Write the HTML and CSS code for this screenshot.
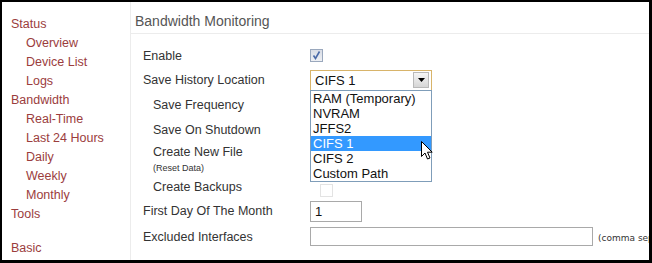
FILE: index.html
```html
<!DOCTYPE html>
<html>
<head>
<meta charset="utf-8">
<link rel="stylesheet" href="styles.css">
</head>
<body>
<div class="frame">
  <nav class="side">
    <div class="nav-item">Status</div>
    <div class="nav-item sub">Overview</div>
    <div class="nav-item sub">Device List</div>
    <div class="nav-item sub">Logs</div>
    <div class="nav-item">Bandwidth</div>
    <div class="nav-item sub">Real-Time</div>
    <div class="nav-item sub">Last 24 Hours</div>
    <div class="nav-item sub">Daily</div>
    <div class="nav-item sub">Weekly</div>
    <div class="nav-item sub">Monthly</div>
    <div class="nav-item">Tools</div>
    <div class="nav-item gap">Basic</div>
  </nav>
  <main class="main">
    <h1 class="title">Bandwidth Monitoring</h1>
    <div class="form">
      <div class="row r24">
        <div class="label">Enable</div>
        <div class="ctrl"><span class="cb checked"><svg viewBox="0 0 11 11" width="11" height="11"><path d="M2.5 5.5 L4.5 8.5 L8.5 1.5" fill="none" stroke="#4a6aa8" stroke-width="1.6"/></svg></span></div>
      </div>
      <div class="row r24">
        <div class="label">Save History Location</div>
        <div class="ctrl">
          <div class="select">
            <span class="sel-text">CIFS 1</span>
            <span class="sel-btn"><svg viewBox="0 0 7 4" width="7" height="4"><path d="M0 0 H7 L3.5 4 Z" fill="#000"/></svg></span>
            <ul class="dropdown">
              <li>RAM (Temporary)</li>
              <li>NVRAM</li>
              <li>JFFS2</li>
              <li class="hl">CIFS 1</li>
              <li>CIFS 2</li>
              <li>Custom Path</li>
            </ul>
            <svg class="cursor" viewBox="0 0 12 19" width="12" height="19"><path d="M0.5 0.5 V15.5 L4 12 L6.5 18 L9 17 L6.5 11.2 H11.2 Z" fill="#fff" stroke="#000" stroke-width="1"/></svg>
          </div>
        </div>
      </div>
      <div class="row r25">
        <div class="label ind">Save Frequency</div>
        <div class="ctrl"></div>
      </div>
      <div class="row r25">
        <div class="label ind">Save On Shutdown</div>
        <div class="ctrl"></div>
      </div>
      <div class="row r33">
        <div class="label ind">
          <div>Create New File</div>
          <div class="small">(Reset Data)</div>
        </div>
        <div class="ctrl"></div>
      </div>
      <div class="row r24">
        <div class="label ind">Create Backups</div>
        <div class="ctrl"><span class="cb off"></span></div>
      </div>
      <div class="row r24">
        <div class="label">First Day Of The Month</div>
        <div class="ctrl"><div class="input short">1</div></div>
      </div>
      <div class="row r27">
        <div class="label">Excluded Interfaces</div>
        <div class="ctrl"><div class="input long"></div><span class="note">(comma separated list)</span></div>
      </div>
    </div>
  </main>
</div>
</body>
</html>
```
FILE: styles.css
```css
html, body {
  margin: 0;
  padding: 0;
  background: #fff;
}
.frame {
  box-sizing: border-box;
  width: 652px;
  height: 263px;
  border-top: 2px solid #000;
  border-left: 2px solid #000;
  border-right: 3px solid #000;
  border-bottom: 3px solid #000;
  display: flex;
  overflow: hidden;
  font-family: "Liberation Sans", Arial, sans-serif;
  font-size: 12px;
  color: #333;
}
.side {
  width: 128px;
  flex: none;
  border-right: 1px solid #ececec;
  padding-top: 13px;
}
.nav-item {
  color: #9b3d3d;
  line-height: 19px;
  height: 19px;
  padding-left: 9px;
  font-size: 12.5px;
}
.nav-item.sub {
  padding-left: 24px;
}
.nav-item.gap {
  margin-top: 15px;
}
.main {
  flex: 1;
  min-width: 0;
}
.title {
  margin: 0;
  font-weight: normal;
  font-size: 14px;
  color: #555;
  line-height: 20px;
  padding: 9px 0 2px 4px;
  border-bottom: 1px solid #ececec;
}
.form {
  padding-top: 10px;
}
.row {
  display: flex;
  align-items: center;
}
.r24 { height: 24px; }
.r25 { height: 25px; }
.r27 { height: 27px; }
.r33 { height: 33px; }
.label {
  width: 167px;
  padding-left: 12px;
  flex: none;
  font-size: 12.5px;
  color: #333;
}
.label.ind {
  padding-left: 22px;
}
.small {
  font-size: 9px;
  margin-top: 4px;
}
.ctrl {
  display: flex;
  align-items: center;
  white-space: nowrap;
}
.cb {
  box-sizing: border-box;
  width: 13px;
  height: 13px;
  display: inline-flex;
  align-items: center;
  justify-content: center;
}
.cb.checked {
  border: 1px solid #9aa8bd;
  background: linear-gradient(#d9dde6, #eef0f4);
  margin-top: -2px;
}
.cb.off {
  border: 1px solid #e3e3e3;
  margin-top: 6px;
}
.select {
  position: relative;
  box-sizing: border-box;
  width: 122px;
  height: 21px;
  border: 1px solid #d8b46a;
  background: #fff;
  display: flex;
  align-items: center;
}
.sel-text {
  flex: 1;
  padding-left: 4px;
  font-size: 13px;
  color: #111;
}
.sel-btn {
  box-sizing: border-box;
  width: 16px;
  height: 16px;
  margin-right: 2px;
  border: 1px solid #b9b9b9;
  background: linear-gradient(#f6f6f6, #d6d6d6);
  display: flex;
  align-items: center;
  justify-content: center;
}
.dropdown {
  position: absolute;
  left: -1px;
  top: 19px;
  box-sizing: border-box;
  width: 122px;
  margin: 0;
  padding: 0;
  list-style: none;
  background: #fff;
  border: 1px solid #7f9db9;
  z-index: 2;
}
.dropdown li {
  height: 15px;
  line-height: 15px;
  padding-left: 2px;
  font-size: 13px;
  color: #111;
}
.dropdown li.hl {
  background: #3399ff;
  color: #fff;
}
.cursor {
  position: absolute;
  left: 110px;
  top: 70px;
  z-index: 3;
}
.input {
  box-sizing: border-box;
  height: 21px;
  border: 1px solid #a9a9a9;
  font-size: 13px;
  color: #111;
  padding-left: 4px;
  line-height: 19px;
}
.input.short {
  width: 52px;
}
.input.long {
  width: 283px;
  height: 19px;
}
.note {
  font-family: "DejaVu Sans", Verdana, sans-serif;
  font-size: 9px;
  color: #333;
  margin-left: 5px;
  margin-top: 3px;
}
```
